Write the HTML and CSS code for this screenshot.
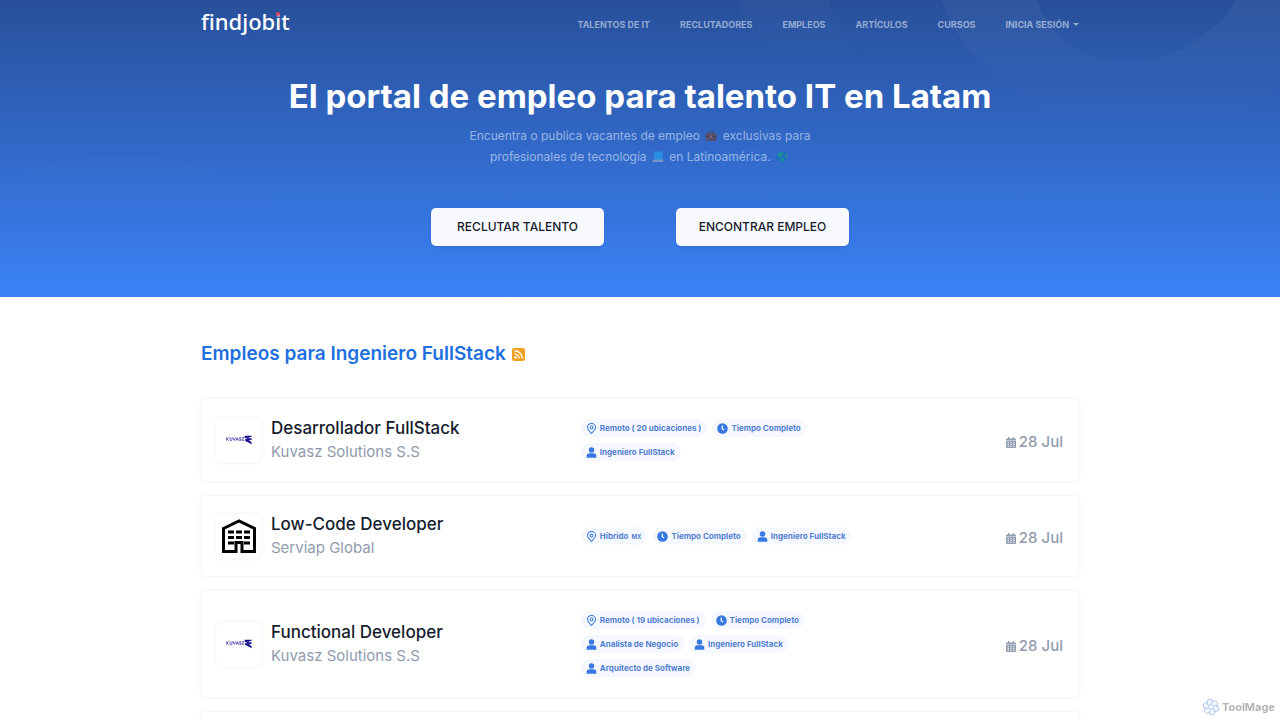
FILE: index.html
```html
<!DOCTYPE html>
<html lang="es">
<head>
<meta charset="utf-8">
<meta name="viewport" content="width=device-width, initial-scale=1">
<title>findjobit</title>
<link rel="stylesheet" href="styles.css">
</head>
<body>
<svg class="sprite" aria-hidden="true">
  <symbol id="pin" viewBox="0 0 24 24"><path d="M12 22.500C8 18.500 3.200 14.500 3.200 9.500a8.800 8.300 0 0 1 17.600 0C20.800 14.500 16 18.500 12 22.500Z" fill="none" stroke="currentColor" stroke-width="2.200"/><circle cx="12" cy="10" r="3.200" fill="none" stroke="currentColor" stroke-width="2.200"/></symbol>
  <symbol id="clock" viewBox="0 0 24 24"><circle cx="12" cy="12" r="11.500" fill="currentColor"/><path d="M11.500 5.500v7l4 3" fill="none" stroke="#fff" stroke-width="2.600"/></symbol>
  <symbol id="user" viewBox="0 0 24 24"><circle cx="12" cy="6.500" r="6" fill="currentColor"/><path d="M1.500 23.500v-4a6 6 0 0 1 6-6h9a6 6 0 0 1 6 6v4z" fill="currentColor"/></symbol>
  <symbol id="calendar" viewBox="0 0 20 22"><path fill="currentColor" fill-rule="evenodd" d="M4 0h2.500v3h7V0H16v3h2a2 2 0 0 1 2 2v2H0V5a2 2 0 0 1 2-2h2zM0 8h20V20a2 2 0 0 1-2 2H2a2 2 0 0 1-2-2zM3 10.500v2h3v-2zm5.500 0v2h3v-2zm5.500 0v2h3v-2zM3 14.500v2h3v-2zm5.500 0v2h3v-2zm5.500 0v2h3v-2zM3 18.300v1.700h3v-1.700zm5.500 0v1.700h3v-1.700zm5.500 0v1.700h3v-1.700z"/></symbol>
  <symbol id="kuvasz" viewBox="0 0 78 28"><g fill="none" stroke="#4a40ab" stroke-width="2.400"><path d="M2 6v10M8 6l-5 5 5 5M12 6v8q0 2 2 2h2q2 0 2-2V6M21 6l4 9 4-9M30 16l4-9 4 9M32 13h4M46 7h-5v4h4v4h-5M48 7h6l-6 8h6"/></g><path fill="#1e1391" d="M56 1h21v3q-8 1-10 5h10v4l-8 2 8 6v6L57 16v-4q6 0 8-3-6 1-9-2z"/></symbol>
  <symbol id="building" viewBox="0 0 34 34"><path d="M1.500 9.500 17 2l15.500 7.500v23H20v-9h-6v9H1.500z" fill="none" stroke="#000" stroke-width="3"/><path fill="#000" d="M6 11.500h6v3H6zm8 0h6v3h-6zm8 0h6v3h-6zM6 17h6v3H6zm8 0h6v3h-6zm8 0h6v3h-6zM6 22.500h6v3H6zm16 0h6v3h-6z"/></symbol>
</svg>

<header class="hero">
  <svg class="hero-shapes" viewBox="0 0 1280 297" preserveAspectRatio="xMidYMin slice" aria-hidden="true">
    <defs><linearGradient id="fade" x2="0" y2="1"><stop stop-color="#fff" stop-opacity="1"/><stop offset="1" stop-color="#fff" stop-opacity="0"/></linearGradient></defs>
    <path fill="url(#fade)" d="M942 0h95c22 70 118 80 173 29 15-9 20-18 25-29h45v90c-90 55-240 45-295-25-22-20-35-40-43-65z"/>
    <path fill="url(#fade)" opacity=".5" d="M738 0h92c0 30 15 50 60 60-60 20-140 0-152-60z"/>
    <path fill="url(#fade)" opacity=".2" d="M0 180c120-50 240-20 300 50 18 25 25 45 25 67H0z"/>
  </svg>
  <div class="container">
    <nav class="nav">
      <a class="brand" href="#">findjob<span class="brand-i">i</span>t</a>
      <div class="nav-links">
        <a href="#">TALENTOS DE IT</a>
        <a href="#">RECLUTADORES</a>
        <a href="#">EMPLEOS</a>
        <a href="#">ARTÍCULOS</a>
        <a href="#">CURSOS</a>
        <a class="nav-drop" href="#">INICIA SESIÓN</a>
      </div>
    </nav>
    <h1>El portal de empleo para talento IT en Latam</h1>
    <p class="lead">Encuentra o publica vacantes de empleo
      <svg class="emoji" viewBox="0 0 24 24" role="img" aria-label="maletín"><path d="M8 7V3h8v4" fill="none" stroke="#4b302e" stroke-width="2"/><rect x="1" y="6" width="22" height="16" rx="3" fill="#6e3f34"/><path d="M1 12h22v2H1z" fill="#4b302e"/><path d="M10 11h4v4h-4z" fill="#c96d4c"/></svg>
      exclusivas para<br>profesionales de tecnología
      <svg class="emoji" viewBox="0 0 24 24" role="img" aria-label="portátil"><path d="M4 1h17v16H4z" fill="#20a8f0"/><path d="M3 17h18l3 5H0z" fill="#a9b4c4"/></svg>
      en Latinoamérica.
      <svg class="emoji" viewBox="0 0 24 24" role="img" aria-label="mundo"><circle cx="12" cy="12" r="11" fill="#1573b8"/><path d="M3 6c4-5 10-4 12-2l-3 5-3 1 2 4 6 2-2 6-4-2-1-6-7-4z" fill="#11ad70"/><path d="m19 6 4 5-2 5-3-4z" fill="#11ad70"/></svg></p>
    <div class="actions">
      <a class="btn" href="#">RECLUTAR TALENTO</a>
      <a class="btn" href="#">ENCONTRAR EMPLEO</a>
    </div>
  </div>
</header>

<main class="container">
  <h2><a href="#">Empleos para Ingeniero FullStack</a>
    <a class="rss" href="#" aria-label="RSS"><svg viewBox="0 0 24 24" aria-hidden="true"><rect width="24" height="24" rx="4" fill="#f0a01f"/><g fill="none" stroke="#fff" stroke-width="2.500"><path d="M4.500 5A14.500 14.500 0 0 1 19 19.500M4.500 11a8.500 8.500 0 0 1 8.500 8.500"/></g><circle cx="6.500" cy="17.500" r="2.300" fill="#fff"/></svg></a></h2>

  <article class="job">
    <div class="job-main">
      <span class="logo"><svg class="logo-kuvasz" role="img" aria-label="Kuvasz"><use href="#kuvasz"/></svg></span>
      <div><h3><a href="#">Desarrollador FullStack</a></h3><p class="company">Kuvasz Solutions S.S</p></div>
    </div>
    <div class="tags">
      <span class="tag"><svg><use href="#pin"/></svg>Remoto ( 20 ubicaciones )</span>
      <span class="tag"><svg><use href="#clock"/></svg>Tiempo Completo</span>
      <span class="tag"><svg><use href="#user"/></svg>Ingeniero FullStack</span>
    </div>
    <time class="date"><svg><use href="#calendar"/></svg>28 Jul</time>
  </article>

  <article class="job">
    <div class="job-main">
      <span class="logo"><svg class="logo-building" role="img" aria-label="Serviap Global"><use href="#building"/></svg></span>
      <div><h3><a href="#">Low-Code Developer</a></h3><p class="company">Serviap Global</p></div>
    </div>
    <div class="tags">
      <span class="tag"><svg><use href="#pin"/></svg>Híbrido <small>MX</small></span>
      <span class="tag"><svg><use href="#clock"/></svg>Tiempo Completo</span>
      <span class="tag"><svg><use href="#user"/></svg>Ingeniero FullStack</span>
    </div>
    <time class="date"><svg><use href="#calendar"/></svg>28 Jul</time>
  </article>

  <article class="job">
    <div class="job-main">
      <span class="logo"><svg class="logo-kuvasz" role="img" aria-label="Kuvasz"><use href="#kuvasz"/></svg></span>
      <div><h3><a href="#">Functional Developer</a></h3><p class="company">Kuvasz Solutions S.S</p></div>
    </div>
    <div class="tags">
      <span class="tag"><svg><use href="#pin"/></svg>Remoto ( 19 ubicaciones )</span>
      <span class="tag"><svg><use href="#clock"/></svg>Tiempo Completo</span>
      <span class="tag"><svg><use href="#user"/></svg>Analista de Negocio</span>
      <span class="tag"><svg><use href="#user"/></svg>Ingeniero FullStack</span>
      <span class="tag"><svg><use href="#user"/></svg>Arquitecto de Software</span>
    </div>
    <time class="date"><svg><use href="#calendar"/></svg>28 Jul</time>
  </article>

  <article class="job"></article>
</main>

<div class="watermark">
  <svg viewBox="0 0 32 32" aria-hidden="true"><g fill="none" stroke="#a9c4f5" stroke-width="2"><path id="petal" d="M16 10c2-6 7-8 11-5 3 3 2 8-1 11"/><use href="#petal" transform="rotate(60 16 16)"/><use href="#petal" transform="rotate(120 16 16)"/><use href="#petal" transform="rotate(180 16 16)"/><use href="#petal" transform="rotate(240 16 16)"/><use href="#petal" transform="rotate(300 16 16)"/><circle cx="16" cy="16" r="5"/></g></svg>
  <span>ToolMage</span>
</div>
</body>
</html>
```
FILE: styles.css
```css
* {
  box-sizing: border-box;
}

body {
  margin: 0;
  background: #fff;
  font-family: Inter, "Liberation Sans", sans-serif;
  color: #161c2d;
}

a {
  color: inherit;
  text-decoration: none;
}

h1, h2, h3, p {
  margin: 0;
}

.sprite {
  position: absolute;
  width: 0;
  height: 0;
}

.container {
  max-width: 910px;
  margin: 0 auto;
  padding: 0 16px;
}

.hero {
  position: relative;
  padding-bottom: 51px;
  background: linear-gradient(#28509a, #3b82f6);
}

.hero-shapes {
  position: absolute;
  inset: 0;
  width: 100%;
  height: 100%;
  opacity: 0.04;
}

.hero .container {
  position: relative;
}

.nav {
  display: flex;
  align-items: center;
  justify-content: space-between;
  height: 48px;
}

.brand {
  padding-bottom: 6px;
  font: 500 22px/30px "Noto Sans", sans-serif;
  color: #fff;
}

.brand-i {
  position: relative;
}

.brand-i::before {
  content: "";
  position: absolute;
  top: 6px;
  left: 1px;
  width: 4px;
  height: 4px;
  border-radius: 50%;
  background: #e0455f;
}

.nav-links {
  display: flex;
  gap: 30px;
  font-size: 9px;
  font-weight: 700;
  color: rgba(255, 255, 255, 0.5);
}

.nav-drop::after {
  content: "";
  display: inline-block;
  margin-left: 4px;
  vertical-align: 2px;
  border: 3px solid transparent;
  border-top-color: currentColor;
  border-bottom: 0;
}

h1 {
  margin-top: 24px;
  font-size: 33px;
  font-weight: 700;
  line-height: 48px;
  text-align: center;
  color: #fff;
}

.lead {
  margin-top: 5px;
  font-size: 12px;
  line-height: 21px;
  text-align: center;
  color: rgba(255, 255, 255, 0.5);
}

.emoji {
  width: 12px;
  height: 12px;
  margin: 0 2px;
  vertical-align: -2px;
  opacity: 0.6;
}

.actions {
  display: flex;
  justify-content: center;
  gap: 72px;
  margin-top: 41px;
}

.btn {
  width: 173px;
  padding: 10px 0;
  border-radius: 5px;
  background: #f8f9fc;
  box-shadow: 0 1px 3px rgba(22, 28, 45, 0.12);
  font-size: 12px;
  font-weight: 500;
  line-height: 18px;
  text-align: center;
  color: #161c2d;
}

h2 {
  display: flex;
  align-items: center;
  gap: 6px;
  margin: 42px 0 30px;
  font-size: 19px;
  font-weight: 600;
  line-height: 30px;
  color: #1e6fe0;
}

.rss {
  display: flex;
}

.rss svg {
  width: 13px;
  height: 13px;
}

.job {
  display: grid;
  grid-template-columns: 5fr 4fr 3fr;
  align-items: center;
  min-height: 80px;
  margin-bottom: 15px;
  padding: 16px 0;
  border-radius: 5px;
  box-shadow: 0 0 3px rgba(60, 72, 88, 0.12);
}

.job-main {
  display: flex;
  align-items: center;
  gap: 10px;
  padding-left: 15px;
}

.logo {
  display: flex;
  align-items: center;
  justify-content: center;
  width: 45px;
  height: 45px;
  border-radius: 6px;
  box-shadow: 0 0 3px rgba(60, 72, 88, 0.12);
}

.logo-kuvasz {
  width: 26px;
  height: 10px;
}

.logo-building {
  width: 34px;
  height: 34px;
}

h3 {
  font-size: 17px;
  font-weight: 500;
  line-height: 24px;
}

.company {
  font-size: 15px;
  line-height: 24px;
  color: #8f9bae;
}

.tags {
  display: flex;
  flex-wrap: wrap;
  gap: 6px 5px;
  padding: 4px 0 4px 14px;
}

.tag {
  display: inline-flex;
  align-items: center;
  gap: 3px;
  height: 18px;
  padding: 0 6px 0 5px;
  border-radius: 9px;
  background: #f5f8fe;
  font-size: 8px;
  font-weight: 700;
  white-space: nowrap;
  color: #5280d2;
}

.tag svg {
  width: 11px;
  height: 11px;
  color: #3778e0;
}

.tag small {
  font-size: 6px;
}

.date {
  display: flex;
  align-items: center;
  justify-content: flex-end;
  gap: 3px;
  padding: 4px 16px 0 0;
  font-size: 15px;
  font-weight: 500;
  line-height: 20px;
  color: #8f9bae;
}

.date svg {
  width: 10px;
  height: 11px;
}

.watermark {
  position: fixed;
  right: 5px;
  bottom: 4px;
  display: flex;
  align-items: center;
  gap: 3px;
  font-size: 11px;
  font-weight: 700;
  line-height: 18px;
  color: #b4b4b4;
}

.watermark svg {
  width: 16px;
  height: 16px;
}
```
